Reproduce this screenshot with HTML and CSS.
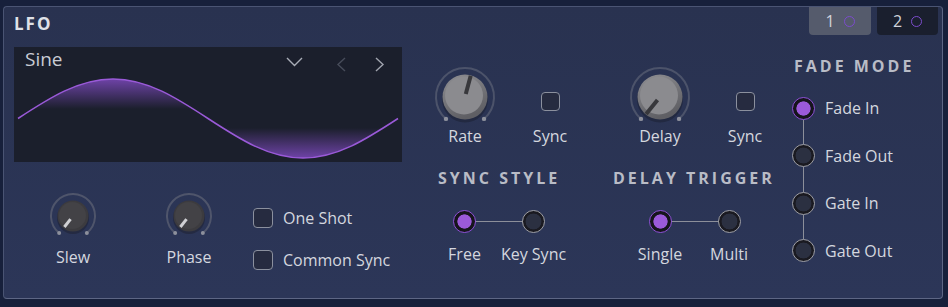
FILE: index.html
```html
<!DOCTYPE html>
<html>
<head>
<meta charset="utf-8">
<link rel="stylesheet" href="styles.css">
</head>
<body>
<div class="panel">
  <div class="tabs">
    <div class="tab tab-active"><span>1</span><span class="tab-dot"></span></div>
    <div class="tab tab-dark"><span>2</span><span class="tab-dot"></span></div>
  </div>

  <div class="col-left">
    <div class="title">LFO</div>
    <div class="display">
      <div class="display-head">
        <span class="wave-name">Sine</span>
        <svg class="chev-down" width="17" height="10" viewBox="0 0 17 10"><polyline points="1,1 8.5,8.5 16,1" fill="none" stroke="#a9adb7" stroke-width="1.4"/></svg>
        <svg class="chev-left" width="10" height="15" viewBox="0 0 10 15"><polyline points="9,1 2,7.5 9,14" fill="none" stroke="#474c5a" stroke-width="1.4"/></svg>
        <svg class="chev-right" width="10" height="15" viewBox="0 0 10 15"><polyline points="1,1 8,7.5 1,14" fill="none" stroke="#a0a4ae" stroke-width="1.4"/></svg>
      </div>
      <svg class="wave" width="388" height="87" viewBox="0 0 388 87">
        <defs>
          <linearGradient id="gTop" x1="0" y1="4" x2="0" y2="34" gradientUnits="userSpaceOnUse">
            <stop offset="0" stop-color="#8a4fd0" stop-opacity="0.75"/>
            <stop offset="1" stop-color="#8a4fd0" stop-opacity="0"/>
          </linearGradient>
          <linearGradient id="gBot" x1="0" y1="83" x2="0" y2="53" gradientUnits="userSpaceOnUse">
            <stop offset="0" stop-color="#8a4fd0" stop-opacity="0.75"/>
            <stop offset="1" stop-color="#8a4fd0" stop-opacity="0"/>
          </linearGradient>
        </defs>
        <path d="M4 43.5 C35 23.26 64.6 4 99 4 C133.4 4 163 23.26 194 43.5 Z" fill="url(#gTop)"/>
        <path d="M194 43.5 C225 63.74 254.6 83 289 83 C323.4 83 353 63.74 384 43.5 Z" fill="url(#gBot)"/>
        <path d="M4 43.5 C35 23.26 64.6 4 99 4 C133.4 4 163 23.26 194 43.5 C225 63.74 254.6 83 289 83 C323.4 83 353 63.74 384 43.5" fill="none" stroke="#9a5ad8" stroke-width="1.5"/>
      </svg>
    </div>
    <div class="bottom-row">
      <div class="knob-sm-item">
        <svg width="50" height="44" viewBox="0 0 50 44">
          <path d="M11.16 40.1 A22 22 0 1 1 38.84 40.1" fill="none" stroke="#4f556b" stroke-width="2"/>
          <circle cx="11.16" cy="40.1" r="2" fill="#8d909c"/>
          <circle cx="38.84" cy="40.1" r="2" fill="#8d909c"/>
          <circle cx="25" cy="25" r="16" fill="#1f2335" opacity="0.6"/>
          <circle cx="25" cy="23" r="15.5" fill="#3c3b3f"/>
          <circle cx="24.5" cy="22.5" r="13.5" fill="#434246"/>
          <line x1="22.54" y1="26.15" x2="16.38" y2="34.03" stroke="#d0d0d3" stroke-width="3"/>
        </svg>
        <div class="label lbl-sm">Slew</div>
      </div>
      <div class="knob-sm-item phase">
        <svg width="50" height="44" viewBox="0 0 50 44">
          <path d="M11.16 40.1 A22 22 0 1 1 38.84 40.1" fill="none" stroke="#4f556b" stroke-width="2"/>
          <circle cx="11.16" cy="40.1" r="2" fill="#8d909c"/>
          <circle cx="38.84" cy="40.1" r="2" fill="#8d909c"/>
          <circle cx="25" cy="25" r="16" fill="#1f2335" opacity="0.6"/>
          <circle cx="25" cy="23" r="15.5" fill="#3c3b3f"/>
          <circle cx="24.5" cy="22.5" r="13.5" fill="#434246"/>
          <line x1="22.54" y1="26.15" x2="16.38" y2="34.03" stroke="#d0d0d3" stroke-width="3"/>
        </svg>
        <div class="label lbl-sm">Phase</div>
      </div>
      <div class="checks">
        <div class="check-row"><span class="box"></span><span class="label">One Shot</span></div>
        <div class="check-row"><span class="box"></span><span class="label">Common Sync</span></div>
      </div>
    </div>
  </div>

  <div class="col-mid">
    <div class="top-row">
      <div class="item">
        <svg width="64" height="58" viewBox="0 0 64 58">
          <path d="M12.97 52.89 A29 29 0 1 1 51.03 52.89" fill="none" stroke="#4c536a" stroke-width="2"/>
          <circle cx="12.97" cy="52.89" r="2.2" fill="#8d909c"/>
          <circle cx="51.03" cy="52.89" r="2.2" fill="#8d909c"/>
          <circle cx="32" cy="33.5" r="23" fill="#1c2033" opacity="0.55"/>
          <circle cx="32" cy="31" r="22.5" fill="url(#rim)"/>
          <circle cx="31" cy="29.5" r="19" fill="#8b8b8f"/>
          <line x1="32.78" y1="28.1" x2="37.69" y2="9.75" stroke="#38383c" stroke-width="4"/>
          <defs>
            <linearGradient id="rim" x1="0" y1="0" x2="0.4" y2="1">
              <stop offset="0" stop-color="#8f8f93"/>
              <stop offset="1" stop-color="#5f5f64"/>
            </linearGradient>
          </defs>
        </svg>
        <div class="label lbl-lg">Rate</div>
      </div>
      <div class="item sync-item gap-s">
        <span class="box box-sync"></span>
        <div class="label lbl-sync">Sync</div>
      </div>
      <div class="item gap-l">
        <svg width="64" height="58" viewBox="0 0 64 58">
          <path d="M12.97 52.89 A29 29 0 1 1 51.03 52.89" fill="none" stroke="#4c536a" stroke-width="2"/>
          <circle cx="12.97" cy="52.89" r="2.2" fill="#8d909c"/>
          <circle cx="51.03" cy="52.89" r="2.2" fill="#8d909c"/>
          <circle cx="32" cy="33.5" r="23" fill="#1c2033" opacity="0.55"/>
          <circle cx="32" cy="31" r="22.5" fill="url(#rim)"/>
          <circle cx="31" cy="29.5" r="19" fill="#8b8b8f"/>
          <line x1="29.48" y1="34.11" x2="18.16" y2="48.1" stroke="#38383c" stroke-width="4"/>
        </svg>
        <div class="label lbl-lg">Delay</div>
      </div>
      <div class="item sync-item gap-s">
        <span class="box box-sync"></span>
        <div class="label lbl-sync">Sync</div>
      </div>
    </div>
    <div class="bottom-row2">
      <div class="group group-sync">
        <div class="heading h-sync">SYNC STYLE</div>
        <div class="opt-grid">
          <div class="connector-h"></div>
          <span class="radio on"></span>
          <span class="radio"></span>
          <span class="label">Free</span>
          <span class="label">Key Sync</span>
        </div>
      </div>
      <div class="group group-delay">
        <div class="heading">DELAY TRIGGER</div>
        <div class="opt-grid grid-delay">
          <div class="connector-h"></div>
          <span class="radio on"></span>
          <span class="radio"></span>
          <span class="label">Single</span>
          <span class="label">Multi</span>
        </div>
      </div>
    </div>
  </div>

  <div class="col-right">
    <div class="heading h-fade">FADE MODE</div>
    <div class="fade-list">
      <div class="fade-row"><span class="radio on"></span><span class="label">Fade In</span></div>
      <div class="connector-v"></div>
      <div class="fade-row"><span class="radio"></span><span class="label">Fade Out</span></div>
      <div class="connector-v"></div>
      <div class="fade-row"><span class="radio"></span><span class="label">Gate In</span></div>
      <div class="connector-v"></div>
      <div class="fade-row"><span class="radio"></span><span class="label">Gate Out</span></div>
    </div>
  </div>
</div>
</body>
</html>
```

FILE: styles.css
```css
* { box-sizing: border-box; }
html, body { margin: 0; padding: 0; }
body {
  background: #17203b;
  width: 948px;
  height: 307px;
  overflow: hidden;
  font-family: "Open Sans", "Liberation Sans", sans-serif;
  color: #d4d7df;
}
.panel {
  position: relative;
  margin: 6px 0 0 3px;
  width: 940px;
  height: 293px;
  border: 1px solid #4a5473;
  border-right-color: #5d6684;
  border-bottom-color: #5d6684;
  border-radius: 4px;
  background: linear-gradient(180deg, #293250 0%, #2c3658 100%);
  display: flex;
  padding-left: 10px;
}
.tabs {
  position: absolute;
  top: 0;
  right: 4px;
  display: flex;
  gap: 6px;
}
.tab {
  height: 28px;
  display: flex;
  align-items: center;
  justify-content: center;
  gap: 9px;
  font-size: 16px;
  line-height: 20px;
  color: #d0d3db;
  border-radius: 0 0 4px 4px;
}
.tab-active { width: 62px; background: #555b6c; }
.tab-dark { width: 61px; background: #1a1f2e; }
.tab-dot {
  width: 11px;
  height: 11px;
  border: 1.5px solid #7c4ccc;
  border-radius: 50%;
}

.col-left {
  width: 388px;
  padding-top: 7px;
}
.title {
  font-size: 17px;
  line-height: 20px;
  font-weight: 700;
  letter-spacing: 2px;
  color: #dfe1e8;
}
.display {
  margin-top: 13px;
  height: 115px;
  background: #1b1f2c;
}
.display-head {
  height: 28px;
  display: flex;
  align-items: flex-start;
  padding: 0 17px 0 11px;
}
.wave-name {
  font-size: 19px;
  line-height: 24px;
  color: #c9ccd4;
}
.chev-down { margin-left: auto; margin-top: 10px; }
.chev-left { margin-left: 33px; margin-top: 10px; }
.chev-right { margin-left: 29px; margin-top: 10px; }
.wave { display: block; }

.bottom-row {
  margin-top: 31px;
  display: flex;
  align-items: flex-start;
}
.knob-sm-item {
  width: 80px;
  margin-left: 19px;
  display: flex;
  flex-direction: column;
  align-items: center;
}
.knob-sm-item svg { display: block; }
.knob-sm-item.phase { margin-left: 36px; }
.label {
  font-size: 16px;
  line-height: 20px;
  color: #d4d7df;
  white-space: nowrap;
}
.lbl-sm { margin-top: 10px; }
.checks {
  margin-left: 24px;
  padding-top: 15px;
  display: flex;
  flex-direction: column;
  gap: 22px;
}
.check-row {
  height: 20px;
  display: flex;
  align-items: center;
  gap: 10px;
}
.box {
  display: block;
  width: 20px;
  height: 20px;
  border: 1.5px solid #8b909e;
  border-radius: 4px;
  background: #262b40;
}

.col-mid {
  margin-left: 28px;
  width: 350px;
  padding-top: 59px;
}
.top-row {
  display: flex;
  align-items: flex-start;
}
.item {
  width: 70px;
  display: flex;
  flex-direction: column;
  align-items: center;
}
.item svg { display: block; }
.gap-s { margin-left: 15px; }
.gap-l { margin-left: 40px; }
.lbl-lg { margin-top: 2px; }
.sync-item { padding-top: 26px; }
.box-sync { width: 19px; height: 19px; }
.lbl-sync { margin-top: 15px; }

.bottom-row2 {
  margin-top: 21.5px;
  display: flex;
  align-items: flex-start;
}
.group {
  display: flex;
  flex-direction: column;
  align-items: flex-start;
}
.heading {
  font-size: 16px;
  line-height: 20px;
  font-weight: 700;
  letter-spacing: 3px;
  color: #b9bcc6;
  white-space: nowrap;
}
.h-sync { margin-left: 8px; }
.group-delay { margin-left: 45px; }
.opt-grid {
  margin-top: 22px;
  display: grid;
  grid-template-columns: 69px 69px;
  grid-template-rows: 23px 20px;
  row-gap: 11px;
  justify-items: center;
}
.grid-delay { margin-left: 12.5px; }
.connector-h {
  grid-column: 1 / 3;
  grid-row: 1;
  justify-self: stretch;
  align-self: center;
  margin: 0 34.5px;
  height: 1px;
  background: #8c8f9a;
}
.opt-grid .radio { grid-row: 1; position: relative; }
.opt-grid .radio:nth-of-type(1) { grid-column: 1; }
.opt-grid .radio:nth-of-type(2) { grid-column: 2; }
.opt-grid .label { grid-row: 2; }

.radio {
  display: block;
  width: 23px;
  height: 23px;
  border-radius: 50%;
  border: 1.3px solid #9d9ea4;
  background: radial-gradient(circle, #2b3041 0 7.6px, #1a1a21 8.2px);
}
.radio.on {
  border-color: #8d4fd5;
  background: radial-gradient(circle, #9b5ad9 0 6.8px, #16151c 7.4px);
}

.col-right {
  margin-left: 12px;
  padding-top: 48.5px;
}
.h-fade { margin-left: 2px; }
.fade-list {
  margin-top: 21.3px;
  display: flex;
  flex-direction: column;
}
.fade-row {
  height: 23px;
  display: flex;
  align-items: center;
  gap: 10px;
}
.connector-v {
  width: 1px;
  height: 24.5px;
  margin-left: 11px;
  background: #8c8f9a;
}
```
